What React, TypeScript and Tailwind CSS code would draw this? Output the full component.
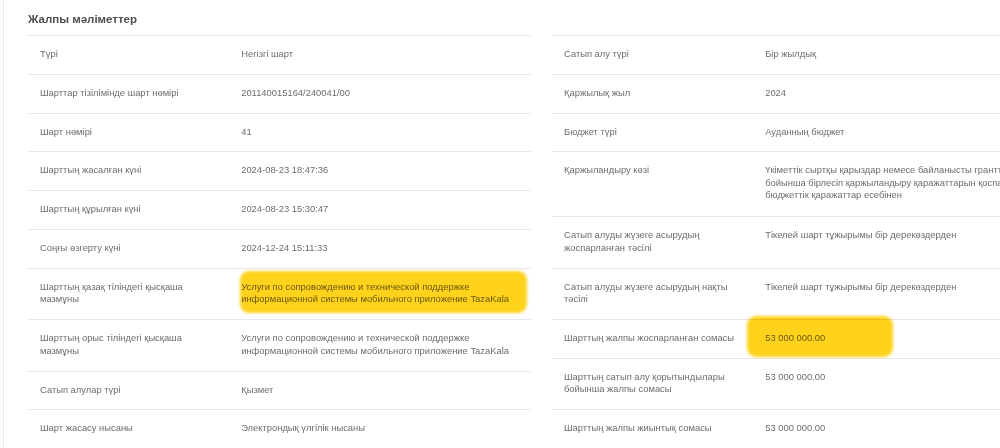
import React from "react";

type Row = {
  label: React.ReactNode;
  value: React.ReactNode;
  hl?: "left" | "right";
  tall?: boolean;
};

const leftRows: Row[] = [
  { label: "Түрі", value: "Негізгі шарт" },
  { label: "Шарттар тізілімінде шарт нөмірі", value: "201140015164/240041/00" },
  { label: "Шарт нөмірі", value: "41" },
  { label: "Шарттың жасалған күні", value: "2024-08-23 18:47:36" },
  { label: "Шарттың құрылған күні", value: "2024-08-23 15:30:47" },
  { label: "Соңғы өзгерту күні", value: "2024-12-24 15:11:33" },
  {
    label: (
      <>
        Шарттың қазақ тіліндегі қысқаша
        <br />
        мазмұны
      </>
    ),
    value: (
      <>
        Услуги по сопровождению и технической поддержке
        <br />
        информационной системы мобильного приложение TazaKala
      </>
    ),
    hl: "left",
  },
  {
    label: (
      <>
        Шарттың орыс тіліндегі қысқаша
        <br />
        мазмұны
      </>
    ),
    value: (
      <>
        Услуги по сопровождению и технической поддержке
        <br />
        информационной системы мобильного приложение TazaKala
      </>
    ),
  },
  { label: "Сатып алулар түрі", value: "Қызмет" },
  { label: "Шарт жасасу нысаны", value: "Электрондық үлгілік нысаны" },
];

const rightRows: Row[] = [
  { label: "Сатып алу түрі", value: "Бір жылдық" },
  { label: "Қаржылық жыл", value: "2024" },
  { label: "Бюджет түрі", value: "Ауданның бюджет" },
  {
    label: "Қаржыландыру көзі",
    value: (
      <>
        Үкіметтік сыртқы қарыздар немесе байланысты гранттар
        <br />
        бойынша бірлесіп қаржыландыру қаражаттарын қоспағанда
        <br />
        бюджеттік қаражаттар есебінен
      </>
    ),
    tall: true,
  },
  {
    label: (
      <>
        Сатып алуды жүзеге асырудың
        <br />
        жоспарланған тәсілі
      </>
    ),
    value: "Тікелей шарт тұжырымы бір дерекөздерден",
  },
  {
    label: (
      <>
        Сатып алуды жүзеге асырудың нақты
        <br />
        тәсілі
      </>
    ),
    value: "Тікелей шарт тұжырымы бір дерекөздерден",
  },
  { label: "Шарттың жалпы жоспарланған сомасы", value: "53 000 000.00", hl: "right" },
  {
    label: (
      <>
        Шарттың сатып алу қорытындылары
        <br />
        бойынша жалпы сомасы
      </>
    ),
    value: "53 000 000.00",
  },
  { label: "Шарттың жалпы жиынтық сомасы", value: "53 000 000.00" },
];

function Table({ rows }: { rows: Row[] }) {
  return (
    <div className="w-[503px] shrink-0 border-b border-[#e8e8e8]">
      {rows.map((r, i) => (
        <div
          key={i}
          className={
            r.tall
              ? "flex border-t border-[#e8e8e8] pb-[1px]"
              : "flex border-t border-[#e8e8e8]"
          }
        >
          <div className="w-[40%] shrink-0 pl-[12px] pr-[8px] pt-[12px] pb-[13.33px] whitespace-nowrap">
            {r.label}
          </div>
          <div className="relative w-[60%] shrink-0 pl-[12px] pr-[4px] pt-[12px] pb-[13.33px] whitespace-nowrap">
            {r.value}
            {r.hl === "left" && (
              <span className="pointer-events-none absolute left-[11px] top-[2px] h-[42px] w-[287px] rounded-[9px] bg-[#ffd21c] mix-blend-multiply blur-[1.5px]" />
            )}
            {r.hl === "right" && (
              <span className="pointer-events-none absolute left-[-6px] top-[-4px] h-[41px] w-[146px] rounded-[9px] bg-[#ffd21c] mix-blend-multiply blur-[1.5px]" />
            )}
          </div>
        </div>
      ))}
    </div>
  );
}

export default function App() {
  return (
    <div className="w-[1000px] h-[448px] overflow-hidden bg-white font-['Liberation_Sans',Arial,sans-serif] text-[9.4px] leading-[12.5px] text-[#6d6d6d]">
      <div className="ml-[3px] h-full border-l border-[#ececec] pl-[24px] pt-[12px]">
        <h2 className="mb-[8px] text-[11.5px] leading-[15px] font-bold text-[#4f4f4f]">
          Жалпы мәліметтер
        </h2>
        <div className="flex gap-[21px]">
          <Table rows={leftRows} />
          <Table rows={rightRows} />
        </div>
      </div>
    </div>
  );
}
